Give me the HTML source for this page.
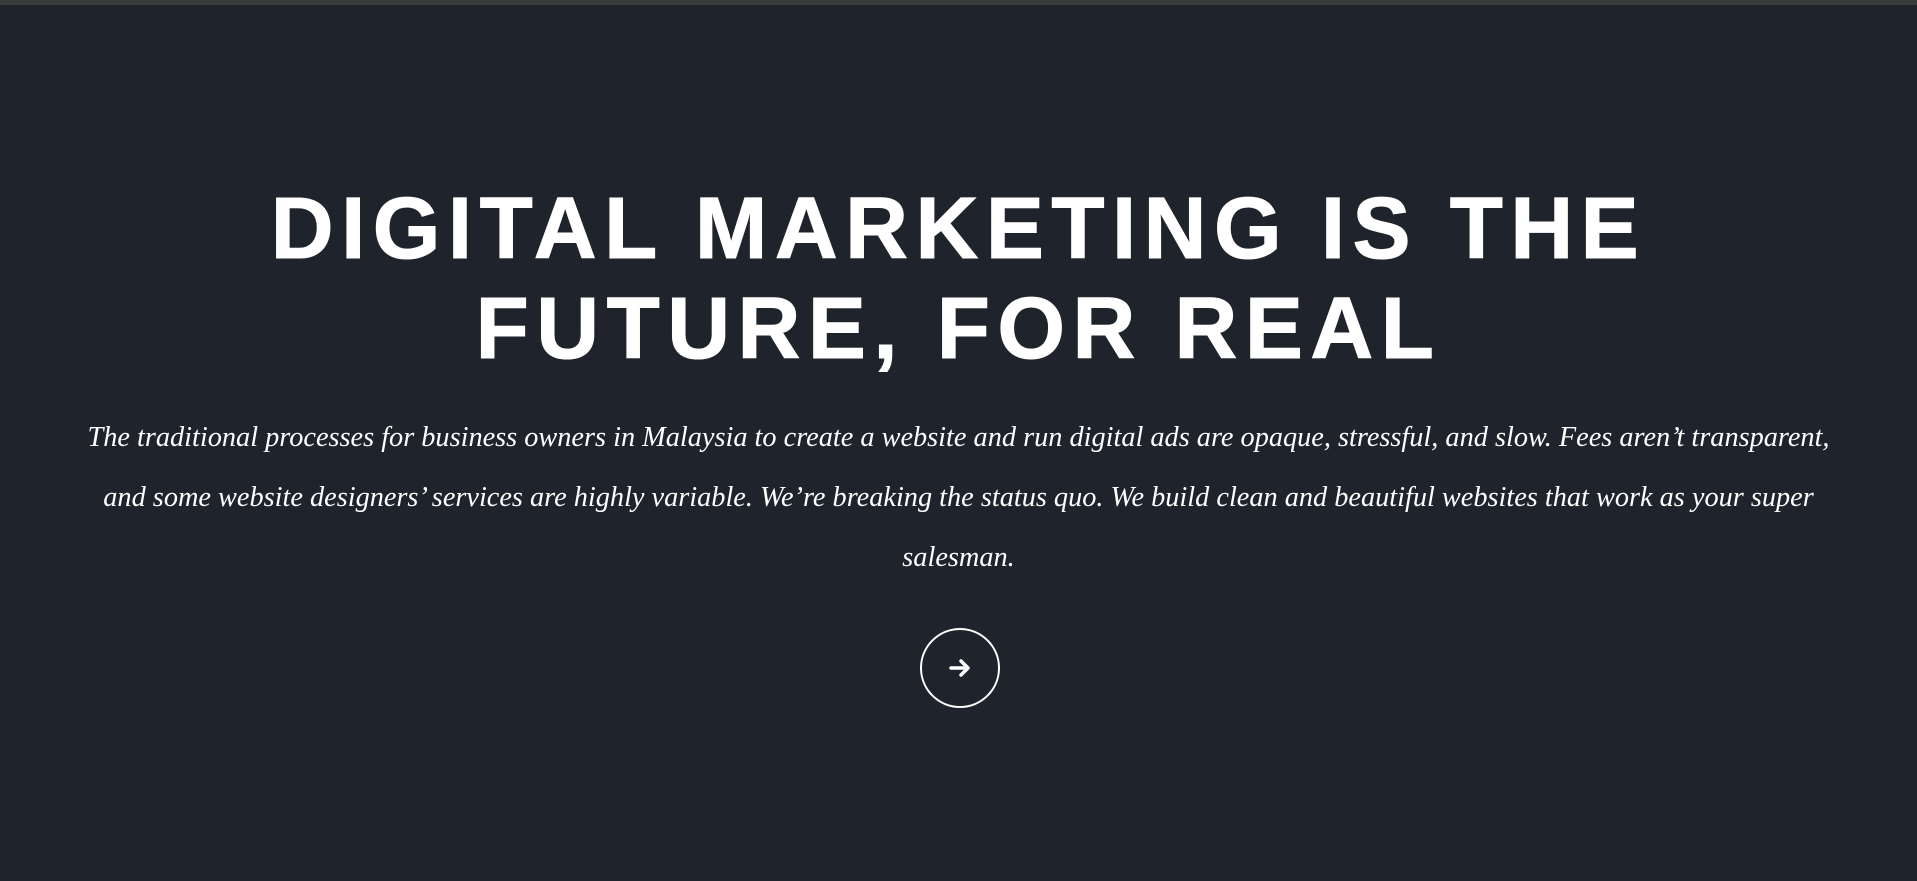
<!DOCTYPE html>
<html><head><style>
html,body{margin:0;padding:0;}
body{width:1917px;height:881px;background:#1f242c;position:relative;overflow:hidden;}
.top{position:absolute;top:0;left:0;width:100%;height:5px;background:#3a3b3c;}
h1{position:absolute;top:179px;left:0;width:100%;margin:0;text-align:center;color:#fff;font-family:"Liberation Sans",sans-serif;font-weight:bold;font-size:87px;line-height:100px;letter-spacing:7.5px;-webkit-text-stroke:1px #fff;}
p{position:absolute;top:408px;left:0;width:100%;margin:0;text-align:center;color:#fff;font-family:"Liberation Serif",serif;font-style:italic;font-size:28.3px;line-height:60px;}
.btn{position:absolute;left:920px;top:628px;width:76px;height:76px;border:2px solid #fff;border-radius:50%;}
.btn svg{position:absolute;left:25px;top:25px;}
</style></head><body>
<div class="top"></div>
<h1>DIGITAL MARKETING IS THE<br>FUTURE, FOR REAL</h1>
<p>The traditional processes for business owners in Malaysia to create a website and run digital ads are opaque, stressful, and slow. Fees aren’t transparent,<br>and some website designers’ services are highly variable. We’re breaking the status quo. We build clean and beautiful websites that work as your super<br>salesman.</p>
<div class="btn"><svg width="26" height="26" viewBox="0 0 26 26"><path d="M4 13H21M14 6L21 13L14 20" fill="none" stroke="#fff" stroke-width="3.5" stroke-linecap="round" stroke-linejoin="round"/></svg></div>
</body></html>
